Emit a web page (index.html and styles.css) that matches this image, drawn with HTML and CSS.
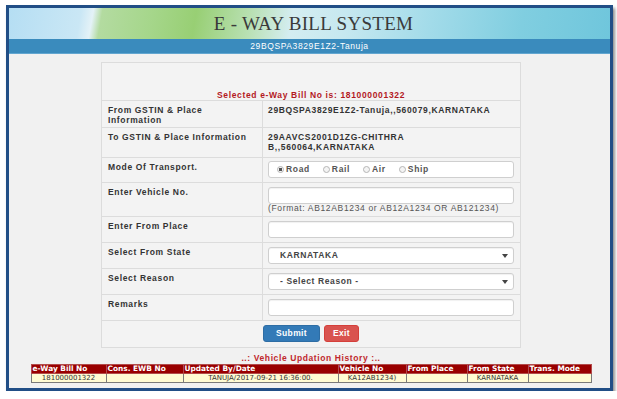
FILE: index.html
```html
<!DOCTYPE html>
<html lang="en">
<head>
    <meta charset="UTF-8">
    <title>E - Way Bill System</title>
    <link rel="stylesheet" href="styles.css">
</head>
<body>

<div class="frame">
    <header class="banner">
        <h1>E - WAY BILL SYSTEM</h1>
    </header>
    <div class="userbar">29BQSPA3829E1Z2-Tanuja</div>

    <main class="content">
        <table class="form">
            <colgroup>
                <col class="col-label">
                <col class="col-value">
            </colgroup>
            <tr class="title-row">
                <td colspan="2">Selected e-Way Bill No is: 181000001322</td>
            </tr>
            <tr>
                <th>From GSTIN &amp; Place Information</th>
                <td class="info">29BQSPA3829E1Z2-Tanuja,,560079,KARNATAKA</td>
            </tr>
            <tr>
                <th>To GSTIN &amp; Place Information</th>
                <td class="info">29AAVCS2001D1ZG-CHITHRA B,,560064,KARNATAKA</td>
            </tr>
            <tr>
                <th>Mode Of Transport.</th>
                <td class="field mode-cell">
                    <div class="modes">
                        <label><span class="radio checked"></span>Road</label>
                        <label><span class="radio"></span>Rail</label>
                        <label><span class="radio"></span>Air</label>
                        <label><span class="radio"></span>Ship</label>
                    </div>
                </td>
            </tr>
            <tr>
                <th>Enter Vehicle No.</th>
                <td class="field vehicle-cell">
                    <input type="text" class="box">
                    <div class="hint">(Format: AB12AB1234 or AB12A1234 OR AB121234)</div>
                </td>
            </tr>
            <tr>
                <th>Enter From Place</th>
                <td class="field"><input type="text" class="box"></td>
            </tr>
            <tr>
                <th>Select From State</th>
                <td class="field">
                    <div class="select-wrap">
                        <select class="box">
                            <option>KARNATAKA</option>
                        </select>
                    </div>
                </td>
            </tr>
            <tr>
                <th>Select Reason</th>
                <td class="field">
                    <div class="select-wrap">
                        <select class="box">
                            <option>- Select Reason -</option>
                        </select>
                    </div>
                </td>
            </tr>
            <tr>
                <th>Remarks</th>
                <td class="field"><input type="text" class="box"></td>
            </tr>
            <tr class="actions">
                <td colspan="2">
                    <button class="btn btn-submit">Submit</button>
                    <button class="btn btn-exit">Exit</button>
                </td>
            </tr>
        </table>

        <div class="history-title">..: Vehicle Updation History :..</div>

        <table class="history">
            <colgroup>
                <col style="width: 75px">
                <col style="width: 77px">
                <col style="width: 155px">
                <col style="width: 68px">
                <col style="width: 61px">
                <col style="width: 61px">
                <col style="width: 63px">
            </colgroup>
            <thead>
                <tr>
                    <th>e-Way Bill No</th>
                    <th>Cons. EWB No</th>
                    <th>Updated By/Date</th>
                    <th>Vehicle No</th>
                    <th>From Place</th>
                    <th>From State</th>
                    <th>Trans. Mode</th>
                </tr>
            </thead>
            <tbody>
                <tr>
                    <td>181000001322</td>
                    <td></td>
                    <td>TANUJA/2017-09-21 16:36:00.</td>
                    <td>KA12AB1234)</td>
                    <td></td>
                    <td>KARNATAKA</td>
                    <td></td>
                </tr>
            </tbody>
        </table>
    </main>
</div>

</body>
</html>
```

FILE: styles.css
```css
body {
    margin: 0;
    font-family: "Liberation Sans", Arial, sans-serif;
    background-color: #fff;
}

.frame {
    margin: 5px 0 0 6px;
    width: 601px;
    border: 3px solid #214e86;
    box-shadow: 2px 3px 3px rgba(0, 0, 0, 0.45);
}

.banner {
    height: 31px;
    display: flex;
    align-items: center;
    justify-content: center;
    background: linear-gradient(100deg, #b5def3 0%, #cae7f5 12%, #e4f2f7 14%, #b3dba0 15.5%, #a5d68a 24%, #98cf74 31%, #b8e0b2 40%, #d4edf1 47%, #c6e8f0 56%, #a2dbe9 70%, #80cee0 85%, #6fc6dc 100%);
}

.banner h1 {
    margin: 0 0 0 8px;
    font-family: "Liberation Serif", "Times New Roman", serif;
    font-size: 19px;
    font-weight: normal;
    letter-spacing: 0.3px;
    color: #3a3a3a;
}

.userbar {
    height: 14px;
    line-height: 14px;
    background-color: #3a8bbd;
    border-bottom: 1px solid #62a6d0;
    color: #fff;
    font-size: 8.5px;
    letter-spacing: 0.6px;
    text-align: center;
}

.content {
    height: 334px;
    box-sizing: border-box;
    padding: 8px 18px 0 21px;
    background-color: #f1f1f1;
}

/* main form */
table.form {
    width: 420px;
    margin: 0 auto;
    border-collapse: collapse;
    table-layout: fixed;
    background-color: #f3f3f3;
    font-size: 8.5px;
    letter-spacing: 0.65px;
    line-height: 9.5px;
    color: #333;
}

.col-label {
    width: 161px;
}

table.form th,
table.form td {
    border: 1px solid #dcdcdc;
    vertical-align: top;
    text-align: left;
}

table.form th {
    padding: 5px 6px 2px;
    font-weight: bold;
}

table.form td.info {
    padding: 5px 8px 5px 5px;
    font-weight: bold;
}

table.form td.field {
    padding: 4px 6px 4px 5px;
}

table.form td.mode-cell {
    padding: 3px 6px 4px 5px;
}

table.form td.vehicle-cell {
    padding-bottom: 2px;
}

.title-row td {
    height: 37px;
    padding: 0;
    vertical-align: bottom !important;
    text-align: center !important;
    color: #b3191f;
    font-weight: bold;
}

.box {
    display: block;
    width: 100%;
    height: 17px;
    box-sizing: border-box;
    margin: 0;
    padding: 0 11px;
    border: 1px solid #cfcfcf;
    border-radius: 3px;
    background-color: #fff;
    box-shadow: inset 0 1px 1px rgba(0, 0, 0, 0.06);
    font-family: inherit;
    font-size: 8.5px;
    font-weight: bold;
    letter-spacing: 0.6px;
    color: #444;
}

select.box {
    appearance: none;
    -webkit-appearance: none;
}

.select-wrap {
    position: relative;
}

.select-wrap::after {
    content: "";
    position: absolute;
    right: 6px;
    top: 7px;
    border-left: 3px solid transparent;
    border-right: 3px solid transparent;
    border-top: 4px solid #444;
}

.modes {
    display: flex;
    align-items: center;
    gap: 13px;
    height: 17px;
    box-sizing: border-box;
    padding-left: 8px;
    border: 1px solid #cfcfcf;
    border-radius: 3px;
    background-color: #fff;
    font-weight: bold;
    color: #555;
}

.modes label {
    display: flex;
    align-items: center;
    gap: 2px;
}

.radio {
    width: 7px;
    height: 7px;
    box-sizing: border-box;
    border: 1px solid #b5b5b5;
    border-radius: 50%;
    background-color: #f4f4f4;
}

.radio.checked {
    background: radial-gradient(circle, #555 0, #555 1.5px, #f4f4f4 2px);
}

.hint {
    color: #555;
}

.actions td {
    padding: 4px 0 5px;
    text-align: center !important;
}

.btn {
    height: 17px;
    padding: 0;
    border: 1px solid;
    border-radius: 3px;
    color: #fff;
    font-family: inherit;
    font-size: 8.5px;
    font-weight: bold;
    letter-spacing: 0.4px;
    vertical-align: top;
}

.btn-submit {
    width: 57px;
    background-color: #337ab7;
    border-color: #2e6da4;
}

.btn-exit {
    width: 35px;
    margin-left: 1px;
    background-color: #d9534f;
    border-color: #d43f3a;
}

/* history */
.history-title {
    margin-top: 5px;
    text-align: center;
    color: #c0282d;
    font-size: 8.5px;
    font-weight: bold;
    letter-spacing: 0.6px;
    line-height: 10px;
}

table.history {
    width: 560px;
    margin: 1px auto 0;
    border-collapse: collapse;
    table-layout: fixed;
    font-family: "DejaVu Sans", Verdana, sans-serif;
}

table.history th {
    height: 8px;
    padding: 0 1px;
    background-color: #990000;
    border: 1px solid #b24a4a;
    color: #fff;
    font-size: 7.4px;
    line-height: 8px;
    text-align: left;
    white-space: nowrap;
    overflow: hidden;
}

table.history td {
    height: 8px;
    padding: 0;
    background-color: #fffbd3;
    border: 1px solid #7a7a7a;
    color: #333;
    font-size: 7px;
    line-height: 8px;
    text-align: center;
    white-space: nowrap;
}
```
